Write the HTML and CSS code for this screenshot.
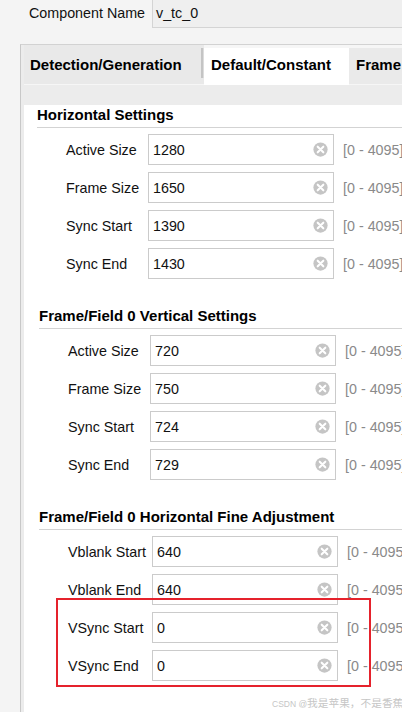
FILE: index.html
```html
<!DOCTYPE html>
<html lang="en">
<head>
<meta charset="utf-8">
<title>Timing Controller</title>
<link rel="stylesheet" href="styles.css">
</head>
<body>
<div class="page">
  <div class="name-row">
    <span class="name-label">Component Name</span>
    <div class="name-field">v_tc_0</div>
  </div>

  <div class="panel">
    <div class="tabs">
      <div class="tab tab-gen">Detection/Generation</div>
      <div class="tab-sep"></div>
      <div class="tab tab-active">Default/Constant</div>
      <div class="tab tab-frame">Frame</div>
    </div>

    <div class="content">
      <section class="group g1">
        <h3 class="group-title">Horizontal Settings</h3>
        <div class="rows">
          <div class="row"><span class="label">Active Size</span><div class="field"><span class="value">1280</span><svg class="clear" viewBox="0 0 16 16"><circle cx="8" cy="8" r="7.6"/><path d="M5 5 L11 11 M11 5 L5 11"/></svg></div><span class="range">[0 - 4095]</span></div>
          <div class="row"><span class="label">Frame Size</span><div class="field"><span class="value">1650</span><svg class="clear" viewBox="0 0 16 16"><circle cx="8" cy="8" r="7.6"/><path d="M5 5 L11 11 M11 5 L5 11"/></svg></div><span class="range">[0 - 4095]</span></div>
          <div class="row"><span class="label">Sync Start</span><div class="field"><span class="value">1390</span><svg class="clear" viewBox="0 0 16 16"><circle cx="8" cy="8" r="7.6"/><path d="M5 5 L11 11 M11 5 L5 11"/></svg></div><span class="range">[0 - 4095]</span></div>
          <div class="row"><span class="label">Sync End</span><div class="field"><span class="value">1430</span><svg class="clear" viewBox="0 0 16 16"><circle cx="8" cy="8" r="7.6"/><path d="M5 5 L11 11 M11 5 L5 11"/></svg></div><span class="range">[0 - 4095]</span></div>
        </div>
      </section>

      <section class="group g2">
        <h3 class="group-title">Frame/Field 0 Vertical Settings</h3>
        <div class="rows">
          <div class="row"><span class="label">Active Size</span><div class="field"><span class="value">720</span><svg class="clear" viewBox="0 0 16 16"><circle cx="8" cy="8" r="7.6"/><path d="M5 5 L11 11 M11 5 L5 11"/></svg></div><span class="range">[0 - 4095]</span></div>
          <div class="row"><span class="label">Frame Size</span><div class="field"><span class="value">750</span><svg class="clear" viewBox="0 0 16 16"><circle cx="8" cy="8" r="7.6"/><path d="M5 5 L11 11 M11 5 L5 11"/></svg></div><span class="range">[0 - 4095]</span></div>
          <div class="row"><span class="label">Sync Start</span><div class="field"><span class="value">724</span><svg class="clear" viewBox="0 0 16 16"><circle cx="8" cy="8" r="7.6"/><path d="M5 5 L11 11 M11 5 L5 11"/></svg></div><span class="range">[0 - 4095]</span></div>
          <div class="row"><span class="label">Sync End</span><div class="field"><span class="value">729</span><svg class="clear" viewBox="0 0 16 16"><circle cx="8" cy="8" r="7.6"/><path d="M5 5 L11 11 M11 5 L5 11"/></svg></div><span class="range">[0 - 4095]</span></div>
        </div>
      </section>

      <section class="group g3">
        <h3 class="group-title">Frame/Field 0 Horizontal Fine Adjustment</h3>
        <div class="rows">
          <div class="row"><span class="label">Vblank Start</span><div class="field"><span class="value">640</span><svg class="clear" viewBox="0 0 16 16"><circle cx="8" cy="8" r="7.6"/><path d="M5 5 L11 11 M11 5 L5 11"/></svg></div><span class="range">[0 - 4095]</span></div>
          <div class="row"><span class="label">Vblank End</span><div class="field"><span class="value">640</span><svg class="clear" viewBox="0 0 16 16"><circle cx="8" cy="8" r="7.6"/><path d="M5 5 L11 11 M11 5 L5 11"/></svg></div><span class="range">[0 - 4095]</span></div>
          <div class="row"><span class="label">VSync Start</span><div class="field"><span class="value">0</span><svg class="clear" viewBox="0 0 16 16"><circle cx="8" cy="8" r="7.6"/><path d="M5 5 L11 11 M11 5 L5 11"/></svg></div><span class="range">[0 - 4095]</span></div>
          <div class="row"><span class="label">VSync End</span><div class="field"><span class="value">0</span><svg class="clear" viewBox="0 0 16 16"><circle cx="8" cy="8" r="7.6"/><path d="M5 5 L11 11 M11 5 L5 11"/></svg></div><span class="range">[0 - 4095]</span></div>
        </div>
      </section>
    </div>
  </div>

  <div class="highlight"></div>
  <div class="watermark"><span class="wm-latin">CSDN @</span>我是苹果，不是香蕉</div>
</div>
</body>
</html>
```

FILE: styles.css
```css
* { box-sizing: border-box; }

html, body {
  margin: 0;
  padding: 0;
  background: #f4f4f4;
}

.page {
  position: relative;
  width: 402px;
  height: 712px;
  overflow: hidden;
  font-family: "Liberation Sans", Arial, "Noto Sans CJK SC", sans-serif;
  font-size: 14.3px;
  color: #111;
}

/* Component name row */
.name-row {
  display: flex;
  align-items: flex-start;
  height: 28px;
  padding-left: 29px;
}

.name-label {
  flex: none;
  width: 123px;
  line-height: 27px;
  white-space: nowrap;
}

.name-field {
  flex: none;
  width: 260px;
  height: 29px;
  margin-top: -1px;
  border: 1px solid #d4d4d4;
  background: #efefef;
  padding-left: 3px;
  line-height: 27px;
}

/* Panel */
.panel {
  margin-top: 16px;
  margin-left: 20px;
  width: 400px;
  height: 668px;
  border-top: 1px solid #d2d2d2;
  border-left: 1px solid #c8c8c8;
  padding-left: 3px;
  background: #ececec;
}

.tabs {
  display: flex;
  align-items: flex-start;
  height: 40px;
  background: #f6f6f6;
}

.tab {
  font-size: 15px;
  font-weight: bold;
  color: #000;
  white-space: nowrap;
}

.tab-gen {
  width: 177px;
  height: 39px;
  line-height: 39px;
  padding-left: 6px;
  background: #e9e9e9;
}

.tab-sep {
  width: 3px;
  height: 39px;
  background: #e9e9e9 linear-gradient(to right, #c4c4c4 0 2px, #dcdcdc 2px 3px) no-repeat 0 3px / 3px 30px;
}

.tab-active {
  width: 145px;
  height: 37px;
  margin-top: 3px;
  padding-left: 7px;
  line-height: 34px;
  background: #fff;
}

.tab-frame {
  flex: 1;
  height: 36px;
  margin-top: 3px;
  padding-left: 7px;
  line-height: 34px;
  background: #eaeaea;
}

/* Content */
.content {
  height: 623px;
  background: #fff;
  border-bottom: 1px solid #d6d6d6;
}

.group {
  padding-left: 13px;
  padding-bottom: 7px;
}

.g2, .g3 { padding-left: 15px; }

.group-title {
  margin: 20px 0 0;
  font-size: 15px;
  font-weight: bold;
  line-height: 20px;
  padding-bottom: 2px;
  border-bottom: 1px solid #d3d3d3;
  color: #000;
  white-space: nowrap;
}

.rows {
  display: flex;
  flex-direction: column;
  gap: 7px;
  margin-top: 6px;
  padding-left: 29px;
}

.row {
  display: flex;
  align-items: center;
  height: 31px;
}

.label {
  flex: none;
  width: 82px;
  white-space: nowrap;
}

.g3 .label { width: 84px; }

.field {
  flex: none;
  display: flex;
  align-items: center;
  justify-content: space-between;
  width: 186px;
  height: 31px;
  border: 1px solid #cbcbcb;
  background: #fff;
  padding: 0 5px 0 4px;
}

.clear {
  width: 15px;
  height: 15px;
  flex: none;
}

.clear circle { fill: #c5c5c5; }

.clear path {
  stroke: #fff;
  stroke-width: 2.2;
  stroke-linecap: round;
  fill: none;
}

.range {
  margin-left: 9px;
  color: #8a8a8a;
  white-space: nowrap;
}

/* Annotation overlay */
.highlight {
  position: absolute;
  left: 56px;
  top: 598px;
  width: 315px;
  height: 89px;
  border: 2px solid #e5222c;
}

.watermark {
  position: absolute;
  left: 272px;
  top: 696px;
  font-family: "Noto Sans CJK SC", sans-serif;
  font-size: 10.7px;
  line-height: 13px;
  color: #c6c6c6;
  white-space: nowrap;
}

.wm-latin {
  font-family: "Liberation Sans", Arial, sans-serif;
  font-size: 8.5px;
}
```
